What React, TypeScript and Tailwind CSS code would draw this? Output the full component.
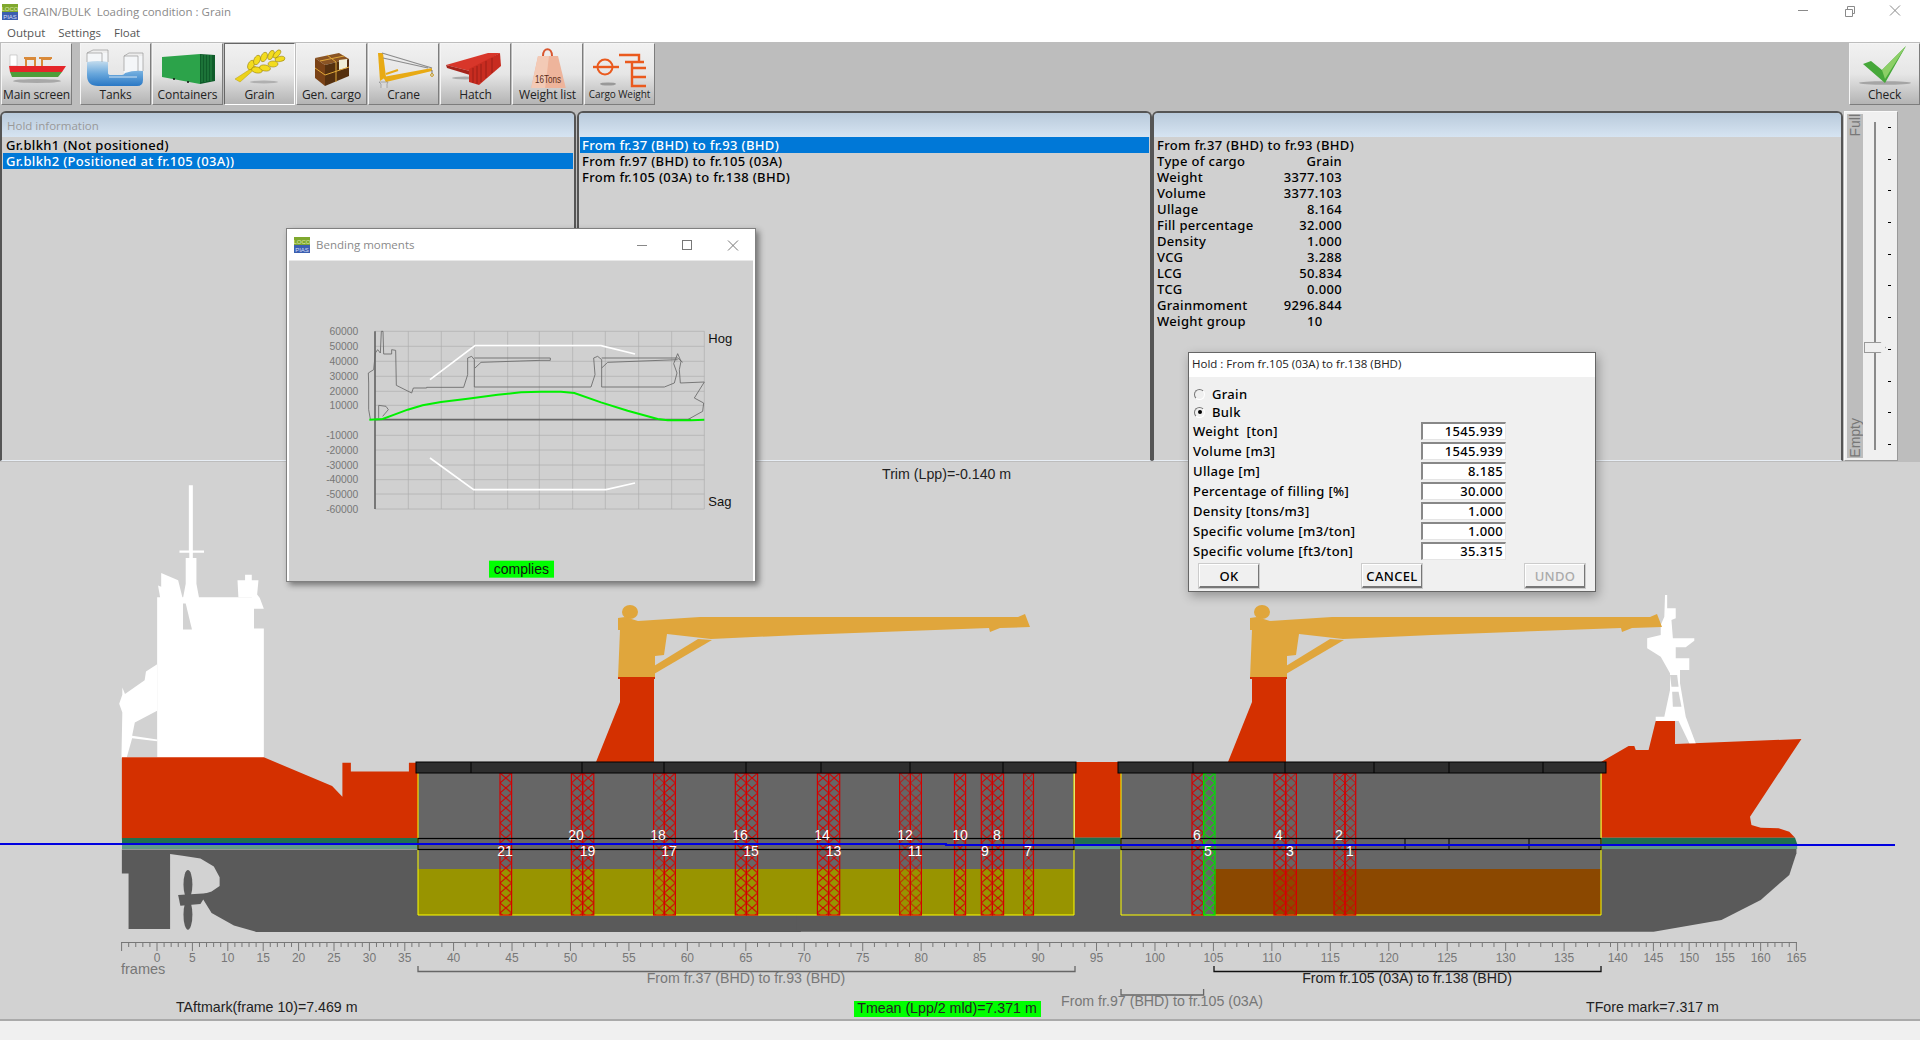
import React from 'react';

const sans = "font-['Liberation_Sans',sans-serif]";
const ui = "font-['Open_Sans',sans-serif]";
const listFont = "font-['Noto_Sans',sans-serif] font-medium text-[13px] tracking-[0.33px]";

const PiasLogo = ({ size = 16 }: { size?: number }) => (
  <svg width={size} height={size} viewBox="0 0 16 16" className="shrink-0">
    <rect width="16" height="8" fill="#7fa82e" />
    <rect y="8" width="16" height="8" fill="#3c5fb0" />
    <text x="8" y="6.5" fontSize="6" textAnchor="middle" fill="#dfe8b0" fontFamily="Liberation Sans">LOCO</text>
    <text x="8" y="14.5" fontSize="6" textAnchor="middle" fill="#d5def5" fontFamily="Liberation Sans">PIAS</text>
  </svg>
);

const MainIcon = () => (
  <svg width="71" height="44" viewBox="0 0 71 44">
    <ellipse cx="36" cy="37" rx="24" ry="2" fill="#a8a8a8" />
    <rect x="9" y="11" width="7" height="11" fill="#fff" stroke="#aaa" strokeWidth="0.5" />
    <path d="M25 22V15h9v7M41 22V15h9" fill="none" stroke="#d98a3a" strokeWidth="2" />
    <path d="M23 14h12M38 14h13" stroke="#d98a3a" strokeWidth="2" />
    <path d="M8 22H65L61 28H9Z" fill="#e5262a" />
    <path d="M9 28H61L57 33H11Z" fill="#4f9d3a" />
  </svg>
);

const TanksIcon = () => (
  <svg width="71" height="44" viewBox="0 0 71 44">
    <defs>
      <linearGradient id="tank-water" x1="0" y1="0" x2="0" y2="1">
        <stop offset="0" stopColor="#c3dcee" />
        <stop offset="0.5" stopColor="#6aa8dc" />
        <stop offset="1" stopColor="#2a78c5" />
      </linearGradient>
    </defs>
    <path d="M7 9H28V30H7ZM44 12H63V30H44Z" fill="#f4f6f8" />
    <path d="M7 18Q18 16 28 18V29Q28 31 31 31H42Q44 31 45 29Q54 26 63 27V36Q63 42 57 42H18Q7 42 7 31Z" fill="url(#tank-water)" />
    <path d="M7 9l6-3h15v12M7 9v9M7 9h15v9M44 12l5-3h14v18M44 12v15M44 12h14v15" fill="none" stroke="#9a9a9a" strokeWidth="0.7" />
    <path d="M29 33H57" stroke="#a9cbe8" strokeWidth="1.5" />
  </svg>
);

const ContainerIcon = () => (
  <svg width="71" height="44" viewBox="0 0 71 44">
    <path d="M10 13L48 10V40L10 33Z" fill="#2ca34a" />
    <path d="M48 10L63 11V37L48 40Z" fill="#0f5c2a" />
    <path d="M50 11v27M53 11v27M56 11v26M59 11v26" stroke="#2b8a47" strokeWidth="1" />
    <circle cx="22" cy="35" r="1" fill="#111" />
    <circle cx="36" cy="38" r="1" fill="#111" />
  </svg>
);

const GrainIcon = () => (
  <svg width="71" height="44" viewBox="0 0 71 44">
    <ellipse cx="40" cy="38" rx="14" ry="1.4" fill="#b0b0b0" />
    <path d="M11 35L31 22l1 2L16 38Z" fill="#ecd21a" stroke="#b79d12" strokeWidth="0.5" />
    <g fill="#f3dc1e" stroke="#9b8410" strokeWidth="0.6">
      <ellipse cx="27" cy="21" rx="3" ry="5" transform="rotate(25 27 21)" />
      <ellipse cx="33" cy="16" rx="3" ry="5" transform="rotate(25 33 16)" />
      <ellipse cx="40" cy="13" rx="3" ry="5" transform="rotate(25 40 13)" />
      <ellipse cx="47" cy="11" rx="2.6" ry="5" transform="rotate(25 47 11)" />
      <ellipse cx="53" cy="10" rx="2.4" ry="5" transform="rotate(40 53 10)" />
      <ellipse cx="33" cy="26" rx="5.5" ry="3" transform="rotate(10 33 26)" />
      <ellipse cx="41" cy="24" rx="5.5" ry="3" transform="rotate(10 41 24)" />
      <ellipse cx="49" cy="20" rx="5" ry="3" transform="rotate(0 49 20)" />
      <ellipse cx="56" cy="15" rx="5" ry="2.6" transform="rotate(-10 56 15)" />
    </g>
  </svg>
);

const CargoIcon = () => (
  <svg width="71" height="44" viewBox="0 0 71 44">
    <path d="M19 14L43 9L53 15L29 21Z" fill="#8a5424" />
    <path d="M19 14L29 21V42L19 34Z" fill="#7a4216" />
    <path d="M29 21L53 15V32L29 42Z" fill="#55300f" />
    <path d="M43 16L51 15V24L43 26Z" fill="#f0efd8" />
    <path d="M24 17L48 12M31 11L40 18V38M19 24L29 31L53 23" fill="none" stroke="#e0a83a" strokeWidth="1" />
  </svg>
);

const CraneIcon = () => (
  <svg width="71" height="44" viewBox="0 0 71 44">
    <polygon points="10,9 15,9 18,33 12,37" fill="#e8aa14" />
    <polygon points="15,33 64,24 64,27 18,38" fill="#e8aa14" />
    <path d="M18 30L30 26" stroke="#e8aa14" strokeWidth="2" />
    <path d="M14 9L64 24M15 14L60 24" stroke="#8b8b8b" strokeWidth="1.2" />
    <path d="M11 38h9l-1 2v6h-6v-6Z" fill="#d8d8d8" stroke="#777" strokeWidth="0.5" />
    <path d="M64 26v4" stroke="#777" strokeWidth="1" />
    <circle cx="64" cy="31" r="1.4" fill="none" stroke="#c79a20" />
  </svg>
);

const HatchIcon = () => (
  <svg width="71" height="44" viewBox="0 0 71 44">
    <ellipse cx="25" cy="34" rx="13" ry="1.4" fill="#aaa" />
    <path d="M6 21L48 9L60 9L30 27Z" fill="#d8362a" />
    <path d="M6 21L30 27V31L7 24Z" fill="#a5231a" />
    <path d="M29 25L60 9L61 22L39 41L29 38Z" fill="#c82c20" />
    <path d="M33 24V39M37 22V40M41 20V38M46 17V34M52 14V29" stroke="#8f1c14" strokeWidth="0.8" />
  </svg>
);

const WeightIcon = () => (
  <svg width="71" height="44" viewBox="0 0 71 44">
    <path d="M31 12c0-9 9-9 9 0" fill="none" stroke="#d9562f" strokeWidth="2" />
    <path d="M26 12H46L54 45H19Z" fill="#eeb49b" />
    <path d="M26 12H37L33 45H19Z" fill="#f3cab6" />
    <text x="36" y="39" fontSize="11" textAnchor="middle" fill="#5a2c18" fontFamily="Liberation Sans" textLength="26" lengthAdjust="spacingAndGlyphs">16Tons</text>
  </svg>
);

const WeightGroupIcon = () => (
  <svg width="71" height="44" viewBox="0 0 71 44">
    <ellipse cx="24" cy="40" rx="8" ry="1.6" fill="#999" />
    <circle cx="21" cy="23" r="7.5" fill="none" stroke="#ea5a1e" strokeWidth="2" />
    <path d="M9 23H35" stroke="#ea5a1e" strokeWidth="2.4" />
    <path d="M35 11H55V18H48M41 18H60M48 18V42H62M48 24H62M48 33H62" fill="none" stroke="#ea5a1e" strokeWidth="2.4" />
  </svg>
);

const CheckIcon = () => (
  <svg width="71" height="44" viewBox="0 0 71 44">
    <ellipse cx="36" cy="39" rx="26" ry="1.8" fill="#a5a5a5" />
    <path d="M14 20L22 17L33 26L57 2L36 39Z" fill="#46a83a" />
    <path d="M33 26L57 2L36 35Z" fill="#8ccf66" />
  </svg>
);

const toolButtons: { label: string; icon: React.ReactNode; small?: boolean }[] = [
  { label: 'Tanks', icon: <TanksIcon /> },
  { label: 'Containers', icon: <ContainerIcon /> },
  { label: 'Grain', icon: <GrainIcon /> },
  { label: 'Gen. cargo', icon: <CargoIcon /> },
  { label: 'Crane', icon: <CraneIcon /> },
  { label: 'Hatch', icon: <HatchIcon /> },
  { label: 'Weight list', icon: <WeightIcon /> },
  { label: 'Cargo Weight', icon: <WeightGroupIcon />, small: true },
];

const ToolButton = ({ label, icon, small, active }: { label: string; icon: React.ReactNode; small?: boolean; active?: boolean }) => (
  <div
    className={`w-[71px] h-[62px] flex flex-col items-center overflow-hidden bg-gradient-to-b from-[#f1f1f1] via-[#e6e6e6] to-[#b4b4b4] border-r border-b border-[#7d7d7d] ${
      active ? 'border-t border-l border-t-[#666] border-l-[#666] border-r-white border-b-white' : 'border-t border-l border-t-[#f5f5f5] border-l-[#f5f5f5]'
    }`}
  >
    <div className="h-[42px] shrink-0">{icon}</div>
    <div className={`${ui} text-[#222] whitespace-nowrap ${small ? 'text-[10px] tracking-[-0.1px] mt-[1px]' : 'text-[12px] tracking-[-0.1px]'}`}>{label}</div>
  </div>
);

const holds = ['From fr.37 (BHD) to fr.93 (BHD)', 'From fr.97 (BHD) to fr.105 (03A)', 'From fr.105 (03A) to fr.138 (BHD)'];

const holdData = [
  ['Type of cargo', 'Grain'],
  ['Weight', '3377.103'],
  ['Volume', '3377.103'],
  ['Ullage', '8.164'],
  ['Fill percentage', '32.000'],
  ['Density', '1.000'],
  ['VCG', '3.288'],
  ['LCG', '50.834'],
  ['TCG', '0.000'],
  ['Grainmoment', '9296.844'],
];

const Panel = ({ className, title, children }: { className: string; title?: string; children: React.ReactNode }) => (
  <div className={`${className} h-[350px] flex flex-col bg-[#d0d0d0] border-t-2 border-l-2 border-r-2 border-[#555] border-b border-b-[#e8eef5] rounded-t-[6px] overflow-hidden`}>
    <div className={`${ui} h-[24px] shrink-0 px-[5px] pt-[4px] text-[11.5px] text-[#999] bg-gradient-to-b from-[#b9cadb] to-[#d6e4f2]`}>{title}</div>
    <div className={`${listFont} text-black leading-[16px]`}>{children}</div>
  </div>
);

const dialogRows = [
  ['Weight  [ton]', '1545.939'],
  ['Volume [m3]', '1545.939'],
  ['Ullage [m]', '8.185'],
  ['Percentage of filling [%]', '30.000'],
  ['Density [tons/m3]', '1.000'],
  ['Specific volume [m3/ton]', '1.000'],
  ['Specific volume [ft3/ton]', '35.315'],
];

const Radio = ({ label, checked }: { label: string; checked?: boolean }) => (
  <div className="h-[18px] flex items-center gap-[7px] pl-[5px]">
    <div className="w-[11px] h-[11px] rounded-full border border-t-[#777] border-l-[#777] border-r-white border-b-white bg-[#f0f0f0] flex items-center justify-center">
      {checked && <div className="w-[4px] h-[4px] rounded-full bg-black" />}
    </div>
    <span>{label}</span>
  </div>
);

const DlgButton = ({ label, disabled }: { label: string; disabled?: boolean }) => (
  <div className={`w-[60px] h-[24px] flex items-center justify-center bg-[#f0f0f0] border border-t-white border-l-white border-r-[#777] border-b-2 border-b-[#777] outline outline-1 outline-[#ccc] ${disabled ? 'text-[#aaa]' : 'text-black'}`}>
    {label}
  </div>
);

const HoldDialog = () => (
  <div className={`absolute left-[1188px] top-[352px] w-[408px] h-[240px] bg-[#f0f0f0] border border-[#666] shadow-[2px_4px_10px_rgba(0,0,0,0.3)] ${listFont} text-black leading-[16px]`}>
    <div className={`${ui} h-[24px] bg-white pl-[3px] pt-[3px] text-[11.5px] tracking-[0px] font-normal text-[#222]`}>Hold : From fr.105 (03A) to fr.138 (BHD)</div>
    <div className="pt-[8px] flex flex-col">
      <Radio label="Grain" checked={false} />
      <Radio label="Bulk" checked />
      <div className="flex flex-col">
        {dialogRows.map(([label, value]) => (
          <div key={label} className="h-[20px] flex items-center pl-[4px]">
            <div className="w-[228px] whitespace-pre">{label}</div>
            <div className="w-[85px] h-[18px] bg-white border-t-2 border-l-2 border-t-[#888] border-l-[#888] border-r border-b border-r-[#e5e5e5] border-b-[#e5e5e5] text-right pr-[2px] leading-[15px]">{value}</div>
          </div>
        ))}
      </div>
      <div className="flex justify-between pl-[10px] pr-[10px] mt-[3px]">
        <DlgButton label="OK" />
        <DlgButton label="CANCEL" />
        <DlgButton label="UNDO" disabled />
      </div>
    </div>
  </div>
);

const chartX = [382, 481, 580, 680, 775, 875, 973, 1073, 1172, 1270];
const chartY: [number, string][] = [
  [335, '60000'], [380, '50000'], [425, '40000'], [470, '30000'], [515, '20000'], [557, '10000'],
  [647, '-10000'], [691, '-20000'], [736, '-30000'], [780, '-40000'], [823, '-50000'], [868, '-60000'],
];

const BendingWindow = () => (
  <div className="absolute left-[286px] top-[228px] w-[470px] h-[354px] flex flex-col bg-white border border-[#808080] shadow-[3px_3px_6px_rgba(0,0,0,0.45)]">
    <div className={`${ui} h-[31px] shrink-0 flex items-center pl-[7px] gap-[6px] text-[11.5px] text-[#8a8a8a]`}>
      <PiasLogo />
      <span className="flex-1">Bending moments</span>
      <svg width="120" height="14" viewBox="0 0 120 14" fill="none" stroke="#777" strokeWidth="1">
        <path d="M2 7.5H12" stroke="#888" />
        <rect x="47.5" y="2.5" width="9" height="9" />
        <path d="M93 2.5L103 12.5M103 2.5L93 12.5" />
      </svg>
    </div>
    <div className="flex-1 mx-[2px] mb-[2px] bg-[#d0d0d0] border-t border-[#e8e8e8]">
      <svg width="465" height="320" viewBox="24 124 1395 960" className="block">
        {chartX.map((x) => <line key={x} x1={x} x2={x} y1="335" y2="868" stroke="#adadad" strokeWidth="2" />)}
        {chartY.map(([y, t]) => (
          <g key={t}>
            <line x1="282" x2="1270" y1={y} y2={y} stroke="#adadad" strokeWidth="2" />
            <text x="232" y={y + 11} fontSize="31" textAnchor="end" fill="#777" fontFamily="Liberation Sans">{t}</text>
          </g>
        ))}
        <path d="M268 598L263 570V490L262 460L278 450L283 400L290 390L298 400L301 335H306L308 403H332V390L344 392L346 497L392 520L397 505H437V503H548L560 465V415L572 410L580 420V502H930L942 465L938 415L950 410L962 420V502H1150L1180 490L1188 460L1178 432L1190 402L1200 425L1195 450L1198 490L1270 487L1240 535L1268 550L1265 575L1220 600" fill="none" stroke="#666" strokeWidth="2.5" />
        <path d="M580 415H808V422H780L600 428L582 445M962 415H1190L1205 428M1190 420L980 428L962 445M293 595V557L315 560L322 570L305 590" fill="none" stroke="#666" strokeWidth="2.5" />
        <line x1="282" x2="282" y1="335" y2="868" stroke="#666" strokeWidth="5" />
        <line x1="282" x2="1230" y1="600" y2="600" stroke="#666" strokeWidth="5" />
        <polyline points="447,480 582,378 960,378 1062,403" fill="none" stroke="#fff" strokeWidth="5" />
        <polyline points="447,715 578,810 975,810 1062,790" fill="none" stroke="#fff" strokeWidth="5" />
        <polyline points="265,600 305,598 340,585 380,570 425,557 480,547 560,537 650,525 720,518 780,516 840,516 880,520 960,548 1040,573 1130,598 1160,602 1230,602 1270,600" fill="none" stroke="#00f000" strokeWidth="6" />
        <text x="1282" y="371" fontSize="39" fill="#111" fontFamily="Liberation Sans">Hog</text>
        <text x="1282" y="858" fontSize="39" fill="#111" fontFamily="Liberation Sans">Sag</text>
        <rect x="624" y="1023" width="195" height="51" fill="#00ff00" />
        <text x="721" y="1062" fontSize="42" textAnchor="middle" fill="#111" fontFamily="Liberation Sans">complies</text>
      </svg>
    </div>
  </div>
);

const frameX = (f: number) => {
  if (f <= 37) return 157 + f * 7.08;
  if (f <= 138) return 418.5 + (f - 37) * 11.69;
  return 1796.4 - (165 - f) * 7.15;
};

const frames = Array.from({ length: 171 }, (_, i) => i - 5);

const sections: [number, number, string][] = [
  [500, 511.6, 'r'], [571.4, 582.6, 'r'], [582.6, 593.8, 'r'], [653.6, 664.3, 'r'], [664.3, 675.4, 'r'],
  [735.3, 746.4, 'r'], [746.4, 757.6, 'r'], [817.4, 828.6, 'r'], [828.6, 839.7, 'r'], [899.6, 910.4, 'r'],
  [910.4, 921.4, 'r'], [954.5, 965.6, 'r'], [981.3, 992.4, 'r'], [992.4, 1003.6, 'r'], [1023.7, 1033.5, 'r'],
  [1192, 1203.6, 'r'], [1274, 1285.7, 'r'], [1285.7, 1296.4, 'r'], [1334, 1345, 'r'], [1345, 1355.7, 'r'],
  [1203.6, 1215, 'g'],
];

const sectionLabels: [string, number, number][] = [
  ['21', 505, 856], ['20', 576, 840], ['19', 587.5, 856], ['18', 658, 840], ['17', 669, 856],
  ['16', 740, 840], ['15', 751, 856], ['14', 822, 840], ['13', 833.5, 856], ['12', 905, 840],
  ['11', 915, 856], ['10', 960, 840], ['9', 985, 856], ['8', 997, 840], ['7', 1028, 856],
  ['6', 1197, 840], ['5', 1208, 856], ['4', 1278.6, 840], ['3', 1290, 856], ['2', 1339, 840], ['1', 1350, 856],
];

const Crane = ({ dx }: { dx: number }) => (
  <g transform={`translate(${dx} 0)`}>
    <path d="M620 678H654V762H596L620 702Z" fill="#d43000" />
    <ellipse cx="630" cy="612" rx="8" ry="7" fill="#e0a63c" />
    <polygon fill="#e0a63c" points="618,618 625,617 638,621 700,617 1018,617 1025,614 1030,627 1000,628 990,632 989,628 800,635 711,639 667,634 664,655 655,656 655,678 618,678 620,630 618,630" />
    <polygon fill="#e0a63c" points="654,666 698,639 712,640 654,674" />
    <rect x="618" y="677" width="37" height="2" fill="#d43000" />
  </g>
);

const ShipView = () => {
  const aft = 'translate(100 480) scale(0.4464 0.3578)';
  const fore = 'translate(800 560) scale(0.7143 0.3333)';
  return (
    <svg width="1920" height="557" viewBox="0 462 1920 557" className="block">
      <defs>
        <pattern id="hatch-red" patternUnits="objectBoundingBox" width="1" height="0.0704" viewBox="0 0 11 10" preserveAspectRatio="none">
          <path d="M0 0L11 10M11 0L0 10" stroke="#d40000" strokeWidth="1" />
        </pattern>
        <pattern id="hatch-green" patternUnits="objectBoundingBox" width="1" height="0.0704" viewBox="0 0 11 10" preserveAspectRatio="none">
          <path d="M0 0L11 10M11 0L0 10" stroke="#00e000" strokeWidth="1" />
        </pattern>
      </defs>

      <text x="882" y="479" fontSize="14.2" fill="#222" fontFamily="Liberation Sans">Trim (Lpp)=-0.140 m</text>

      {/* aft superstructure */}
      <g transform={aft} fill="#fff">
        <polygon points="128,328 345,328 345,415 367,415 367,778 128,778" />
        <polygon points="128,515 128,645 78,678 72,715 128,725 128,778 48,778 50,650 43,625 50,600 50,580 56,598 100,560 103,535" />
        <polygon fill="#d2d2d2" points="128,730 128,775 60,775 72,722" />
        <polygon points="137,260 175,280 185,330 137,330" />
        <polygon points="130,295 140,300 148,330 135,330" />
        <polygon points="199,15 208,15 208,197 233,197 233,203 208,203 208,218 216,218 216,290 222,330 186,330 192,290 192,218 200,218 200,203 178,203 178,197 199,197" />
        <polygon points="310,328 308,280 325,280 325,265 340,265 340,280 355,280 352,320 358,330 367,360 345,360 340,328" />
        <polygon fill="#d2d2d2" points="186,345 192,345 206,418 186,418" />
      </g>

      {/* aft hull */}
      <g transform={aft}>
        <polygon fill="#d43000" points="49,775 367,775 520,855 543,885 543,790 562,790 562,815 692,815 692,790 720,790 720,1005 49,1005" />
        <polygon fill="#5a5a5a" points="49,1033 1570,1033 1570,1263 350,1263 300,1245 250,1210 225,1160 250,1150 268,1135 268,1110 255,1080 225,1058 185,1050 157,1045 157,1255 64,1255 64,1100 49,1100" />
        <ellipse cx="197" cy="1130" rx="10" ry="40" fill="#5a5a5a" />
        <ellipse cx="197" cy="1215" rx="10" ry="42" fill="#5a5a5a" />
        <polygon fill="#5a5a5a" points="175,1160 240,1155 225,1185 180,1190" />
      </g>

      <rect x="122" y="838" width="296" height="6" fill="#1f7050" />
      <rect x="122" y="844" width="296" height="5" fill="#5f9a88" />

      {/* bow */}
      <g transform={fore}>
        <polygon fill="#5a5a5a" points="-5,867 1395,867 1395,880 1385,945 1345,1020 1290,1080 1195,1115 -5,1115" />
        <polygon fill="#d43000" points="385,606 450,606 450,833 385,833" />
        <polygon fill="#d43000" points="1122,605 1160,558 1168,558 1170,570 1188,570 1198,483 1225,483 1225,552 1402,537 1330,770 1332,795 1345,803 1370,805 1385,815 1393,833 1122,833" />
        <polygon fill="#1f7050" points="1122,833 1393,833 1396,852 1122,852" />
        <polygon fill="#5f9a88" points="1122,852 1396,852 1396,867 1122,867" />
        <rect x="385" y="833" width="65" height="19" fill="#1f7050" />
        <rect x="385" y="852" width="65" height="15" fill="#5f9a88" />
        <polygon fill="#fff" points="1211,105 1214,105 1214,145 1226,145 1226,175 1220,180 1222,235 1252,235 1252,242 1240,262 1226,262 1226,295 1245,295 1245,330 1232,330 1232,370 1240,470 1254,550 1245,550 1230,483 1198,483 1198,470 1210,470 1218,390 1218,340 1205,290 1186,265 1186,235 1205,225 1205,195 1210,170" />
        <polygon fill="#d2d2d2" points="1221,395 1230,395 1234,440 1222,440" />
        <polygon fill="#d2d2d2" points="1218,345 1228,345 1230,380 1220,380" />
      </g>

      <Crane dx={0} />
      <Crane dx={632} />

      {/* holds */}
      <rect x="418" y="773" width="656" height="142" fill="#666" />
      <rect x="418" y="869" width="656" height="46" fill="#989400" />
      <rect x="1121" y="773" width="480" height="142" fill="#666" />
      <rect x="1214" y="869" width="387" height="46" fill="#8b4800" />
      <polyline points="418,773 418,915 1074,915 1074,773" fill="none" stroke="#ffff00" strokeWidth="1" />
      <polyline points="1121,773 1121,915 1601,915 1601,773" fill="none" stroke="#ffff00" strokeWidth="1" />

      {sections.map(([x1, x2, c]) => (
        <rect
          key={x1}
          x={x1}
          y="773"
          width={x2 - x1}
          height="142"
          fill={c === 'g' ? 'url(#hatch-green)' : 'url(#hatch-red)'}
          stroke={c === 'g' ? '#00e000' : '#d40000'}
          strokeWidth="1.2"
        />
      ))}

      <rect x="416" y="762" width="660" height="11" fill="#2e2e2e" stroke="#000" strokeWidth="1" />
      <rect x="1118" y="762" width="488" height="11" fill="#2e2e2e" stroke="#000" strokeWidth="1" />
      <path d="M471 762V773M582 762V773M664 762V773M746 762V773M821 762V773M910 762V773M1003 762V773M1193 762V773M1285 762V773M1374 762V773M1449 762V773M1543 762V773" stroke="#000" strokeWidth="1" />
      <rect x="418" y="838.5" width="656" height="11" fill="none" stroke="#000" strokeWidth="1.2" />
      <rect x="1121" y="838.5" width="480" height="11" fill="none" stroke="#000" strokeWidth="1.2" />
      <path d="M1405 838V849M1449 838V849M1529 838V849" stroke="#000" strokeWidth="1" />

      <path d="M0 844H946V845H1895" stroke="#0000e0" strokeWidth="2" fill="none" />

      {sectionLabels.map(([t, x, y]) => (
        <text key={t} x={x} y={y} fontSize="14" textAnchor="middle" fill="#fff" fontFamily="Liberation Sans">{t}</text>
      ))}

      {/* frame ruler */}
      <line x1="121" x2="1797" y1="942.5" y2="942.5" stroke="#777" />
      {frames.map((f) => (
        <line key={f} x1={frameX(f)} x2={frameX(f)} y1="942" y2={f % 5 === 0 ? 951 : 947} stroke="#777" />
      ))}
      {frames.filter((f) => f % 5 === 0 && f >= 0).map((f) => (
        <text key={f} x={frameX(f)} y="961.5" fontSize="12" textAnchor="middle" fill="#777" fontFamily="Liberation Sans">{f}</text>
      ))}
      <text x="121" y="974" fontSize="14.5" fill="#777" fontFamily="Liberation Sans">frames</text>

      <path d="M418 966V971.5H1075V966" fill="none" stroke="#666" strokeWidth="1.3" />
      <text x="746" y="983" fontSize="14.2" textAnchor="middle" fill="#777" fontFamily="Liberation Sans">{holds[0]}</text>
      <path d="M1214 966V971.5H1601V966" fill="none" stroke="#111" strokeWidth="1.3" />
      <text x="1407" y="983" fontSize="14.2" textAnchor="middle" fill="#222" fontFamily="Liberation Sans">{holds[2]}</text>
      <path d="M1121 989V995H1203.6V989" fill="none" stroke="#666" strokeWidth="1.3" />
      <text x="1162" y="1006" fontSize="14.2" textAnchor="middle" fill="#777" fontFamily="Liberation Sans">{holds[1]}</text>

      <text x="176" y="1012" fontSize="14.2" fill="#222" fontFamily="Liberation Sans">TAftmark(frame 10)=7.469 m</text>
      <rect x="854" y="1001" width="187" height="16" fill="#00ff00" />
      <text x="947" y="1013" fontSize="14.2" textAnchor="middle" fill="#222" fontFamily="Liberation Sans">Tmean (Lpp/2 mld)=7.371 m</text>
      <text x="1586" y="1012" fontSize="14.2" fill="#222" fontFamily="Liberation Sans">TFore mark=7.317 m</text>
    </svg>
  );
};

const Slider = () => (
  <div className="w-[54px] h-[350px] flex bg-[#f0f0f0] border border-[#fafafa] border-r-[#999] border-b-[#999] ml-[1px]">
    <div className={`${sans} w-[16px] ml-[2px] my-[2px] bg-[#bdbdbd] flex flex-col justify-between items-center text-[14px] text-[#777]`}>
      <span className="[writing-mode:vertical-rl] rotate-180 leading-[16px]">Full</span>
      <span className="[writing-mode:vertical-rl] rotate-180 leading-[16px]">Empty</span>
    </div>
    <div className="relative w-[24px] flex justify-center py-[10px]">
      <div className="w-[2px] h-full bg-[#8a8a8a]" />
      <div className="absolute left-[1px] top-[230px] w-[22px] h-[11px] bg-[#efefef] border border-[#999] [clip-path:polygon(0_0,75%_0,100%_50%,75%_100%,0_100%)]" />
    </div>
    <div className="flex flex-col justify-between py-[15px] pl-[1px]">
      {Array.from({ length: 11 }, (_, i) => <div key={i} className="w-[3px] h-[1px] bg-black" />)}
    </div>
  </div>
);

export default function App() {
  return (
    <div className="relative w-[1920px] h-[1040px] overflow-hidden flex flex-col bg-[#d2d2d2]">
      <div className={`${ui} h-[24px] bg-white flex items-center pl-[2px] gap-[5px] text-[11.5px] text-[#8a8a8a]`}>
        <PiasLogo />
        <span className="flex-1 whitespace-pre">GRAIN/BULK  Loading condition : Grain</span>
        <svg width="120" height="14" viewBox="0 0 120 14" className="mr-[2px] mb-[2px]" fill="none" stroke="#8a8a8a" strokeWidth="1">
          <path d="M0 6.5H10" />
          <path d="M47.5 5.5H54.5V12.5H47.5ZM49.5 5V2.5H56.5V9.5H55" />
          <path d="M92 1.5L102 11.5M102 1.5L92 11.5" />
        </svg>
      </div>
      <div className={`${ui} h-[18px] bg-white flex items-center pl-[7px] gap-[13px] text-[11.5px] text-[#555]`}>
        <span>Output</span>
        <span>Settings</span>
        <span>Float</span>
      </div>

      <div className="h-[69px] bg-[#bdbdbd] pt-[1px] flex">
        <div className="ml-px mr-[8px]">
          <ToolButton label="Main screen" icon={<MainIcon />} />
        </div>
        <div className="flex gap-px">
          {toolButtons.map((b) => (
            <ToolButton key={b.label} label={b.label} icon={b.icon} small={b.small} active={b.label === 'Grain'} />
          ))}
        </div>
        <div className="ml-auto">
          <ToolButton label="Check" icon={<CheckIcon />} />
        </div>
      </div>

      <div className="h-[351px] bg-[#bdbdbd] flex items-start">
        <Panel className="w-[576px]" title="Hold information">
          <div className="px-[4px]">Gr.blkh1 (Not positioned)</div>
          <div className="mx-[1px] px-[3px] bg-[#0078d7] text-white">Gr.blkh2 (Positioned at fr.105 (03A))</div>
        </Panel>
        <Panel className="w-[575px] ml-[1px]">
          {holds.map((h, i) => (
            <div key={h} className={`mx-[1px] px-[2px] ${i === 0 ? 'bg-[#0078d7] text-white' : ''}`}>{h}</div>
          ))}
        </Panel>
        <Panel className="w-[691px]">
          <div className="pl-[3px]">{holds[0]}</div>
          {holdData.map(([k, v]) => (
            <div key={k} className="pl-[3px] flex">
              <span className="w-[122px]">{k}</span>
              <span className="w-[63px] text-right">{v}</span>
            </div>
          ))}
          <div className="pl-[3px] flex">
            <span className="w-[150px]">Weight group</span>
            <span>10</span>
          </div>
        </Panel>
        <Slider />
      </div>

      <ShipView />

      <div className="h-[21px] bg-[#f0f0f0] border-t-2 border-t-[#aaa]" />

      <BendingWindow />
      <HoldDialog />
    </div>
  );
}
